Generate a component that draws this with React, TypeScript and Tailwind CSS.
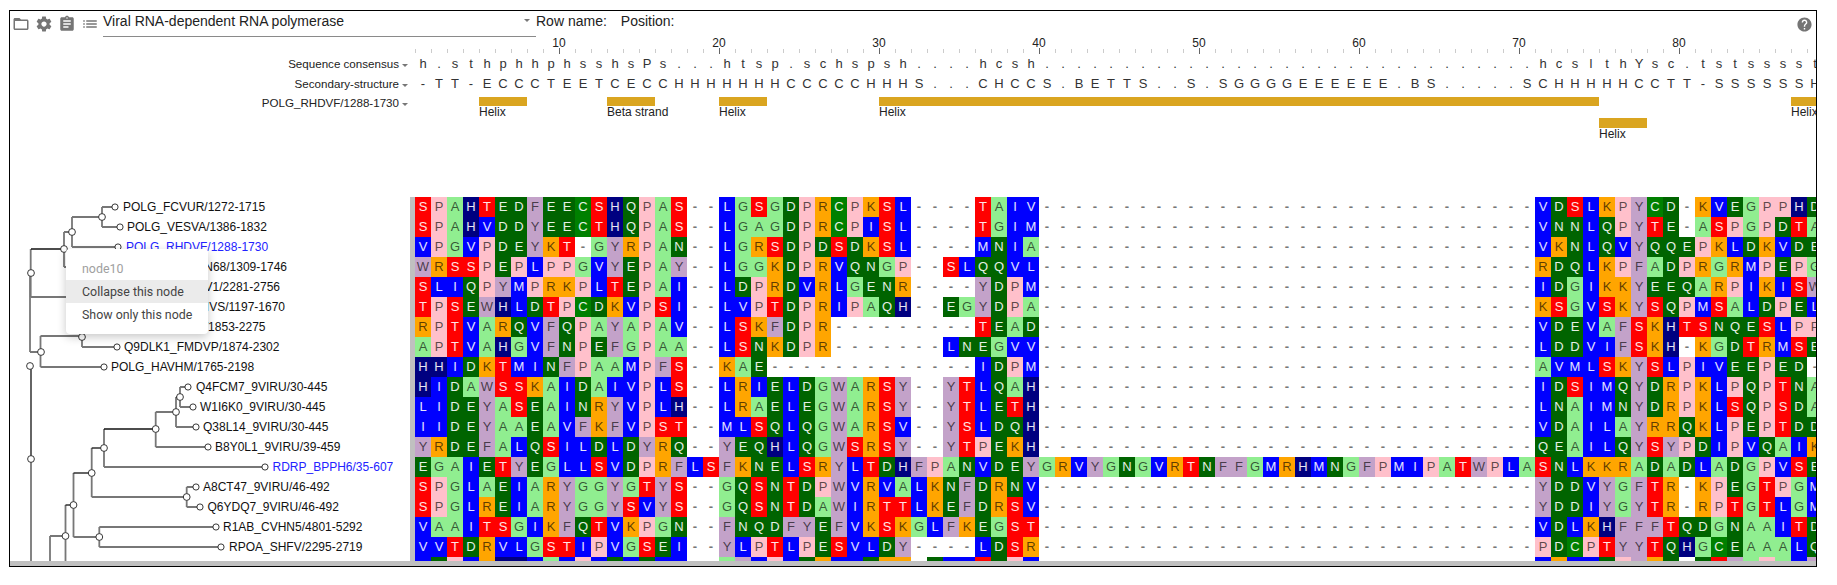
import React from "react";

const DASH31 = "-".repeat(31);
const rows: string[] = [
  "SPAHTEDFEECSHQPAS--LGSGDPRCPKSL----TAIV" + DASH31 + "VDSLKPYCD-KVEGPPHD",
  "SPAHVDDYEECTHQPAS--LGAGDPRCPISL----TGIM" + DASH31 + "VNNLQPYTE-ASPGPDTA",
  "VPGVPDEYKT-GYRPAN--LGRSDPDSDKSL----MNIA" + DASH31 + "VKNLQVYQQEPKLDKVDE",
  "WRSSPEPLPPGVYEPAY--LGGKDPRVQNGP--SLQQVL" + DASH31 + "RDQLKPFADPRGRMPEPG",
  "SLIQPYMPRKPLTEPAI--LDPRDVRLGENR----YDPM" + DASH31 + "IDGIKKYEEQARPIKISW",
  "TPSEWHLDTPCDKVPSI--LVPTDPRIPAQH--EGYDPA" + DASH31 + "KSGVSKYSQPMSALDPEL",
  "RPTVARQVFQPAYAPAV--LSKFDPR---------TEAD" + DASH31 + "VDEVAFSKHTSNQESLPP",
  "APTVAHGVFNPEFGPAA--LSNKDPR-------LNEGVV" + DASH31 + "LDDVIFSKH-KGDTRMSE",
  "HHIDKTMINFPAAMPFS--KAE-------------IDPM" + DASH31 + "AVMLSKYSLPIVEEPED-",
  "HIDAWSSKAIDAIVPLS--LRIELDGWARSY--YTLQAH" + DASH31 + "IDSIMQYDRPKLPQPTNA",
  "LIDEYASEAINRYVPLH--LRAELEGWARSY--YTLETH" + DASH31 + "LNAIMNYDRPKLSQPSDA",
  "IIDEYAAEAVFKFVPST--MLSQLQGWARSV--YSLDQH" + DASH31 + "VDAILAYRRQKLPEPTDD",
  "YRDEFALQSILDLDYRQ--YEQHLQGWSRSY--YTPEKH" + DASH31 + "QEAILQYSYPDIPVQAIK",
  "EGAIETYEGLLSVDPRFLSFKNELSRYLTDHFPANVDEYGRVYGNGVRTNFFGMRHMNGFPMIPATWPLASNLKKRADADLADGPVSE",
  "SPGLAEIARYGGYGTYS--GQSNTDPWVRVALKNFDRNV" + DASH31 + "YDDVYGFTR-KPEGTPGM",
  "SPGLREIARYGGYSVYS--GQSNTDAWIRTTLKEFDRSV" + DASH31 + "YDDIYGYTR-RPTGTLGM",
  "VAAITSGIKFQTVKPGN--FNQDFYEFVKSKGLFKEGST" + DASH31 + "VDLKHFFFTQDGNAAITD",
  "VVTDRVLGSTIPVGSEI--YLPTLPESVLDY----LDSR" + DASH31 + "PDCPTYYTQHGCEAAALQ",
  "LDPLKHHLALPIDLDLI--AYLPLDRLIDRR-DLITDPL" + DASH31 + "IRLIDPYRD-DSYAPALF",
];

const consensus =
  "h.sthphhphsshsPs...htsp.schspsh....hcsh" + ".".repeat(31) + "hcslthYsc.tstsssst";
const secondary =
  "-TT-ECCCTEETCECCHHHHHHHCCCCCHHHS...CHCCS.BETTS..S.SGGGGEEEEEE.BS.....SCHHHHHCCTT-SSSSSSH";

const dark = "text-white/90";
const light = "text-black/65";
const cellStyle: Record<string, string> = {
  L: `bg-[#0000ff] ${dark}`,
  I: `bg-[#0000ff] ${dark}`,
  V: `bg-[#0000ff] ${dark}`,
  M: `bg-[#0000ff] ${dark}`,
  S: `bg-[#ff0000] ${dark}`,
  T: `bg-[#ff0000] ${dark}`,
  D: `bg-[#006400] ${dark}`,
  E: `bg-[#006400] ${dark}`,
  N: `bg-[#006400] ${dark}`,
  Q: `bg-[#006400] ${dark}`,
  A: `bg-[#90ee90] ${light}`,
  G: `bg-[#90ee90] ${light}`,
  P: `bg-[#ffc0cb] ${light}`,
  K: `bg-[#ffa500] ${light}`,
  R: `bg-[#ffa500] ${light}`,
  F: `bg-[#c3a2c9] ${light}`,
  Y: `bg-[#c3a2c9] ${light}`,
  W: `bg-[#c3a2c9] ${light}`,
  H: `bg-[#000080] ${dark}`,
  C: `bg-[#008000] ${dark}`,
  "-": "bg-white text-[#777777] font-bold",
};

const leaves: { name: string; x?: number; end?: number; row: number; blue?: boolean }[] = [
  { name: "POLG_FCVUR/1272-1715", x: 123, row: 0 },
  { name: "POLG_VESVA/1386-1832", x: 127, row: 1 },
  { name: "POLG_RHDVF/1288-1730", x: 126, row: 2, blue: true },
  { name: "POLG_NVN68/1309-1746", end: 287, row: 3 },
  { name: "POLG_SBV1/2281-2756", end: 280, row: 4 },
  { name: "POLG_NIVS/1197-1670", end: 285, row: 5 },
  { name: "POLG_FMDVS/1853-2275", end: 265.5, row: 6 },
  { name: "Q9DLK1_FMDVP/1874-2302", x: 124, row: 7 },
  { name: "POLG_HAVHM/1765-2198", x: 111, row: 8 },
  { name: "Q4FCM7_9VIRU/30-445", x: 196, row: 9 },
  { name: "W1I6K0_9VIRU/30-445", x: 200, row: 10 },
  { name: "Q38L14_9VIRU/30-445", x: 203, row: 11 },
  { name: "B8Y0L1_9VIRU/39-459", x: 215, row: 12 },
  { name: "RDRP_BPPH6/35-607", x: 272.5, row: 13, blue: true },
  { name: "A8CT47_9VIRU/46-492", x: 203, row: 14 },
  { name: "Q6YDQ7_9VIRU/46-492", x: 207.5, row: 15 },
  { name: "R1AB_CVHN5/4801-5292", x: 223, row: 16 },
  { name: "RPOA_SHFV/2295-2719", x: 229, row: 17 },
];

const TOP = 197;
const LEFT = 10;

const greyLines = [
  "M102 207V227M102 207H115M102 227H120",
  "M72 217V247M72 217H102M72 247H118",
  "M64 232V267M64 232H72M64 267H100",
  "M30.7 249V297M30.7 297H70",
  "M82 320V347M82 347H117M40.5 336H82",
  "M40.5 336V367M40.5 367H104M30 352H40.5",
  "M30 273V352",
  "M31 459V561",
  "M50 536V561M50 536H65.5",
  "M65.5 505V561",
  "M73.5 473V537M73.5 537H99.3",
  "M99.3 527V547M99.3 527H216M99.3 547H221",
  "M91.7 448V497M91.7 497H186.7",
  "M186.7 487V507M186.7 487H196M186.7 507H200",
  "M104 429V467M104 467H265",
  "M155.7 412V447M155.7 412H176M155.7 447H208",
  "M176 397V427M176 427H196",
  "M180 387V407M180 387H188M180 407H193",
];
const blackLines = [
  "M31 249H64",
  "M31 366V459",
  "M65.5 505H73.5",
  "M73.5 473H91.7",
  "M91.7 448H104",
  "M104 429H155.7",
  "M176 397H180",
];
const nodes: [number, number][] = [
  [102, 217], [72, 232], [64, 249], [31, 273], [82, 337], [41, 352], [30, 366], [31, 459],
  [65.5, 536], [73.5, 505], [91.7, 473], [104, 448], [155.7, 429], [176, 412], [180, 397],
  [186.7, 497], [99.3, 537],
];
const leafDots: [number, number][] = [
  [115, 207], [120, 227], [118, 247], [117, 347], [104, 367], [188, 387], [193, 407], [196, 427],
  [208, 447], [265, 467], [196, 487], [200, 507], [216, 527], [221, 547],
];

function MI({ d, className }: { d: string; className: string }) {
  return (
    <svg viewBox="0 0 24 24" className={className} fill="#757575">
      <path d={d} />
    </svg>
  );
}

function Caret() {
  return <span className="ml-[3px] mt-[3px] h-0 w-0 border-x-[3.5px] border-t-[3.5px] border-x-transparent border-t-[#777777]" />;
}

function Tree() {
  return (
    <div className="relative h-full w-[400px] shrink-0 overflow-hidden text-[12px] leading-[20px] text-[#111111]">
      <svg className="absolute left-0 top-0" width="400" height="364" viewBox={`${LEFT} ${TOP} 400 364`} fill="none">
        {greyLines.map((d) => (
          <path key={d} d={d} stroke="#777777" strokeWidth="1.8" />
        ))}
        {blackLines.map((d) => (
          <path key={d} d={d} stroke="#111111" strokeWidth="1.3" />
        ))}
        {nodes.map(([x, y]) => (
          <circle key={`${x}-${y}`} cx={x} cy={y} r="3.4" fill="#ffffff" stroke="#222222" strokeWidth="0.9" />
        ))}
        {leafDots.map(([x, y]) => (
          <circle key={`${x}-${y}`} cx={x} cy={y} r="3.1" fill="#ffffff" stroke="#222222" strokeWidth="0.9" />
        ))}
      </svg>
      {leaves.map((l) => (
        <span
          key={l.name}
          className={`absolute whitespace-nowrap ${l.blue ? "text-[#2222ff]" : ""}`}
          style={
            l.end !== undefined
              ? { right: 410 - l.end, top: l.row * 20 }
              : { left: (l.x ?? 0) - LEFT, top: l.row * 20 }
          }
        >
          {l.name}
        </span>
      ))}
      <div className="absolute left-[56px] top-[52px] w-[142px] rounded-[4px] bg-white py-[8px] font-['Roboto',sans-serif] text-[12.4px] leading-[23px] text-[#444444] shadow-[0_3px_10px_rgba(0,0,0,0.22)]">
        <div className="pl-[16px] text-[#a0a0a0]">node10</div>
        <div className="bg-[#ebebeb] pl-[16px]">Collapse this node</div>
        <div className="pl-[16px]">Show only this node</div>
      </div>
    </div>
  );
}

function Ruler() {
  return (
    <div className="flex h-[17px] w-[1401px] overflow-hidden">
      {Array.from({ length: 88 }, (_, i) => {
        const major = i % 10 === 9;
        return (
          <div key={i} className="relative flex h-full w-[16px] shrink-0 items-start pt-[11px]">
            <div className={major ? "h-[6px] w-px bg-[#666666]" : "mt-[1px] h-[4px] w-px bg-[#cccccc]"} />
            {major && (
              <span className="absolute -left-[8px] top-0 w-[16px] text-center text-[12px] leading-[13px] text-[#222222]">
                {i + 1}
              </span>
            )}
          </div>
        );
      })}
    </div>
  );
}

function LetterRow({ text }: { text: string }) {
  return (
    <div className="flex w-[1401px] overflow-hidden text-[13px] leading-[20px] text-[#333333]">
      {text.split("").map((c, i) => (
        <span key={i} className="w-[16px] shrink-0 text-center">
          {c}
        </span>
      ))}
    </div>
  );
}

function Bar({ label, col, span, row }: { label: string; col: number; span: number; row: number }) {
  return (
    <div className="flex flex-col" style={{ gridColumn: `${col + 1} / span ${span}`, gridRow: row }}>
      <div className="h-[10px] bg-[#daa520]" />
      <span className="whitespace-nowrap text-[12px] leading-[12px] text-[#222222]">{label}</span>
    </div>
  );
}

function LabelCell({ text }: { text: string }) {
  return (
    <div className="flex h-[20px] w-[405px] shrink-0 items-center justify-end pr-[7px] text-[11.6px] text-[#222222]">
      <span>{text}</span>
      <Caret />
    </div>
  );
}

export default function App() {
  return (
    <div className="pl-[9px] pt-[10px] font-['Liberation_Sans',Arial,sans-serif]">
      <div className="flex h-[557px] w-[1808px] flex-col overflow-hidden border border-black bg-white">
        <div className="flex h-[26px] shrink-0 items-start">
          <div className="ml-[2px] mt-[4px] flex gap-[5px]">
            <MI className="h-[18px] w-[18px]" d="M20 6h-8l-2-2H4c-1.1 0-1.99.9-1.99 2L2 18c0 1.1.9 2 2 2h16c1.1 0 2-.9 2-2V8c0-1.1-.9-2-2-2zm0 12H4V8h16v10z" />
            <MI className="h-[18px] w-[18px]" d="M19.43 12.98c.04-.32.07-.64.07-.98s-.03-.66-.07-.98l2.11-1.65c.19-.15.24-.42.12-.64l-2-3.46c-.12-.22-.39-.3-.61-.22l-2.49 1c-.52-.4-1.08-.73-1.69-.98l-.38-2.65C14.46 2.18 14.25 2 14 2h-4c-.25 0-.46.18-.49.42l-.38 2.65c-.61.25-1.17.59-1.69.98l-2.49-1c-.23-.09-.49 0-.61.22l-2 3.46c-.13.22-.07.49.12.64l2.11 1.65c-.04.32-.07.65-.07.98s.03.66.07.98l-2.11 1.65c-.19.15-.24.42-.12.64l2 3.46c.12.22.39.3.61.22l2.49-1c.52.4 1.08.73 1.69.98l.38 2.65c.03.24.24.42.49.42h4c.25 0 .46-.18.49-.42l.38-2.65c.61-.25 1.17-.59 1.69-.98l2.49 1c.23.09.49 0 .61-.22l2-3.46c.12-.22.07-.49-.12-.64l-2.11-1.65zM12 15.5c-1.93 0-3.5-1.57-3.5-3.5s1.57-3.5 3.5-3.5 3.5 1.57 3.5 3.5-1.57 3.5-3.5 3.5z" />
            <MI className="h-[18px] w-[18px]" d="M19 3h-4.18C14.4 1.84 13.3 1 12 1c-1.3 0-2.4.84-2.82 2H5c-1.1 0-2 .9-2 2v14c0 1.1.9 2 2 2h14c1.1 0 2-.9 2-2V5c0-1.1-.9-2-2-2zm-7 0c.55 0 1 .45 1 1s-.45 1-1 1-1-.45-1-1 .45-1 1-1zm2 14H7v-2h7v2zm3-4H7v-2h10v2zm0-4H7V7h10v2z" />
            <MI className="h-[18px] w-[18px]" d="M3 13h2v-2H3v2zm0 4h2v-2H3v2zm0-8h2V7H3v2zm4 4h14v-2H7v2zm0 4h14v-2H7v2zM7 7v2h14V7H7z" />
          </div>
          <div className="ml-[4px] flex h-[26px] w-[433px] items-start justify-between border-b border-[#8a8a8a] pr-[6px] pt-[1px] text-[14px] leading-[18px] text-[#222222]">
            <span>Viral RNA-dependent RNA polymerase</span>
            <span className="mt-[7px] h-0 w-0 border-x-[3.5px] border-t-[3.5px] border-x-transparent border-t-[#777777]" />
          </div>
          <span className="pt-[1px] text-[14px] leading-[18px] text-[#222222]">Row name:</span>
          <span className="ml-[14px] pt-[1px] text-[14px] leading-[18px] text-[#222222]">Position:</span>
          <MI className="ml-auto mr-[3px] mt-[5px] h-[17px] w-[17px]" d="M12 2C6.48 2 2 6.48 2 12s4.48 10 10 10 10-4.48 10-10S17.52 2 12 2zm1 17h-2v-2h2v2zm2.07-7.75l-.9.92C13.45 12.9 13 13.5 13 15h-2v-.5c0-1.1.45-2.1 1.17-2.83l1.24-1.26c.37-.36.59-.86.59-1.41 0-1.1-.9-2-2-2s-2 .9-2 2H8c0-2.21 1.79-4 4-4s4 1.79 4 4c0 .88-.36 1.68-.93 2.25z" />
        </div>

        <div className="flex shrink-0">
          <div className="w-[405px] shrink-0" />
          <Ruler />
        </div>

        <div className="flex h-[20px] shrink-0">
          <LabelCell text="Sequence consensus" />
          <LetterRow text={consensus} />
        </div>
        <div className="flex h-[20px] shrink-0">
          <LabelCell text="Secondary-structure" />
          <LetterRow text={secondary} />
        </div>

        <div className="flex h-[103px] shrink-0">
          <div className="-mt-[1px]">
            <LabelCell text="POLG_RHDVF/1288-1730" />
          </div>
          <div className="mt-[3px] grid h-[43px] w-[1401px] grid-cols-[repeat(88,16px)] grid-rows-[21px_22px] overflow-hidden">
            <Bar label="Helix" col={4} span={3} row={1} />
            <Bar label="Beta strand" col={12} span={3} row={1} />
            <Bar label="Helix" col={19} span={3} row={1} />
            <Bar label="Helix" col={29} span={45} row={1} />
            <Bar label="Helix" col={86} span={2} row={1} />
            <Bar label="Helix" col={74} span={3} row={2} />
          </div>
        </div>

        <div className="flex min-h-0 flex-1">
          <Tree />
          <div className="h-full w-[5px] shrink-0 bg-[#c0c0c0]" />
          <div className="h-full w-[1401px] overflow-hidden text-[13px] leading-[20px]">
            {rows.map((r, ri) => (
              <div key={ri} className="flex h-[20px]">
                {r.split("").map((c, ci) => (
                  <span key={ci} className={`h-[20px] w-[16px] shrink-0 text-center ${cellStyle[c]}`}>
                    {c}
                  </span>
                ))}
              </div>
            ))}
          </div>
        </div>
        <div className="h-[5px] shrink-0 bg-[#c0c0c0]" />
      </div>
    </div>
  );
}
